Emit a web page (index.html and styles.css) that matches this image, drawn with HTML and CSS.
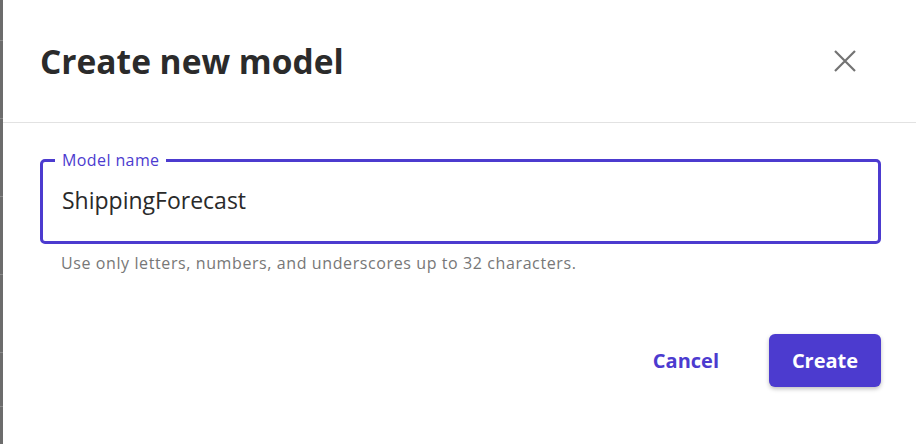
FILE: index.html
```html
<!DOCTYPE html>
<html lang="en">
<head>
<meta charset="utf-8">
<title>Create new model</title>
<link rel="stylesheet" href="styles.css">
</head>
<body>
<div class="page">
  <div class="edge"></div>
  <div class="dialog">
    <header class="dialog-header">
      <h1 class="dialog-title">Create new model</h1>
      <button class="close-btn" aria-label="Close">
        <svg width="24" height="24" viewBox="0 0 24 24"><path d="M2 2 L22 22 M22 2 L2 22" stroke="#737373" stroke-width="2.2" fill="none"/></svg>
      </button>
    </header>
    <div class="dialog-body">
      <fieldset class="field">
        <legend class="field-label">Model name</legend>
        <div class="field-value">ShippingForecast</div>
      </fieldset>
      <p class="field-help">Use only letters, numbers, and underscores up to 32 characters.</p>
      <div class="actions">
        <button class="btn-text">Cancel</button>
        <button class="btn-primary">Create</button>
      </div>
    </div>
  </div>
</div>
</body>
</html>
```
FILE: styles.css
```css
html, body {
  margin: 0;
  padding: 0;
  background: #ffffff;
  font-family: "Open Sans", "Lato", sans-serif;
}
.page {
  display: flex;
  width: 916px;
  height: 444px;
}
.edge {
  width: 3px;
  background: repeating-linear-gradient(to bottom, #6c6c6c 0, #6c6c6c 20px, #8a8a8a 20px, #8a8a8a 21px, #6c6c6c 21px, #6c6c6c 78px);
  background-position: 0 -58px;
}
.dialog {
  flex: 1;
  display: flex;
  flex-direction: column;
}
.dialog-header {
  height: 122px;
  border-bottom: 1px solid #e2e2e2;
  display: flex;
  align-items: center;
  justify-content: space-between;
  padding: 0 59px 0 37px;
}
.dialog-title {
  margin: 0;
  font-size: 33.5px;
  font-weight: 700;
  color: #2b2b2b;
}
.close-btn {
  background: none;
  border: 0;
  padding: 0;
  width: 24px;
  height: 24px;
  display: flex;
}
.dialog-body {
  padding: 27px 35px 0 37px;
}
.field {
  margin: 0;
  border: 3px solid #4c3bcf;
  border-radius: 5px;
  padding: 0 12px 0;
  height: 94px;
  box-sizing: border-box;
}
.field-label {
  padding: 0 7px;
  font-size: 16px;
  letter-spacing: 0.4px;
  color: #4c3bcf;
  line-height: 20px;
}
.field-value {
  padding: 15px 7px 0;
  font-size: 23px;
  color: #2a2a2a;
  line-height: 30px;
}
.field-help {
  margin: 8px 0 0 21px;
  font-size: 16px;
  letter-spacing: 0.6px;
  color: #777777;
}
.actions {
  margin-top: 60px;
  display: flex;
  justify-content: flex-end;
  align-items: center;
  gap: 50px;
}
.btn-text {
  background: none;
  border: 0;
  padding: 0;
  font-family: inherit;
  font-size: 20px;
  font-weight: 700;
  color: #4c3bcf;
}
.btn-primary {
  width: 112px;
  height: 53px;
  border: 0;
  border-radius: 6px;
  background: #4c3bcf;
  color: #ffffff;
  font-family: inherit;
  font-size: 20px;
  font-weight: 700;
  box-shadow: 0 2px 4px rgba(0, 0, 0, 0.25);
}
```
